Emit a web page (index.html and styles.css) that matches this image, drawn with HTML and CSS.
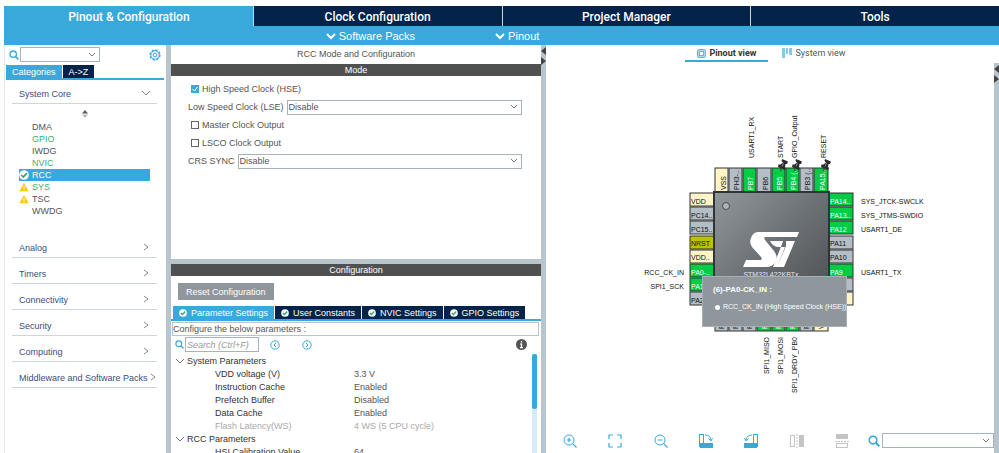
FILE: index.html
```html
<!DOCTYPE html>
<html lang="en">
<head>
    <meta charset="UTF-8">
    <meta name="viewport" content="width=device-width, initial-scale=1.0">
    <title>Pinout &amp; Configuration</title>
    <link rel="stylesheet" href="styles.css">
</head>
<body>
    <svg width="0" height="0" class="defs" aria-hidden="true">
        <symbol id="search" viewBox="0 0 10 10"><circle cx="4.2" cy="4.2" r="3.2" fill="none" stroke="#39a9dc" stroke-width="1.3"/><path d="M6.5 6.5L9.4 9.4" stroke="#39a9dc" stroke-width="1.6"/></symbol>
        <symbol id="down" viewBox="0 0 10 10"><path d="M1 3L5 7L9 3" fill="none" stroke="currentColor"/></symbol>
        <symbol id="right" viewBox="0 0 10 10"><path d="M3 2L7 5L3 8" fill="none" stroke="currentColor"/></symbol>
        <symbol id="ok" viewBox="0 0 10 10"><circle cx="5" cy="5" r="4.8" fill="#fff"/><path d="M2.3 5L4.3 7L7.8 3.2" fill="none" stroke="#2fa866" stroke-width="1.7"/></symbol>
        <symbol id="warn" viewBox="0 0 10 10"><path d="M5 1L9.6 9.3H0.4Z" fill="#ffc800"/><path d="M5 3.8V6.6M5 7.3V8.3" stroke="#fff"/></symbol>
        <symbol id="pushpin" viewBox="0 0 10 12"><path d="M4 0L10 2.5L9 5L7.5 5L7 8L8 9.5L6.5 11L0 8L0.5 5.5H2.5L5 3.5L3.5 2Z" fill="#2b2b2b"/><path d="M3.5 9L2.5 12" stroke="#444" stroke-width="1.3"/><path d="M5.5 4L4 7.5" stroke="#888"/></symbol>
    </svg>

    <nav class="main-tabs">
        <a href="#pinout" class="active">Pinout &amp; Configuration</a>
        <a href="#clock">Clock Configuration</a>
        <a href="#project">Project Manager</a>
        <a href="#tools">Tools</a>
    </nav>
    <div class="sub-bar">
        <button><svg class="icon"><use href="#down"/></svg>Software Packs</button>
        <button><svg class="icon"><use href="#down"/></svg>Pinout</button>
    </div>

    <main class="workspace">
        <aside class="sidebar">
            <div class="sidebar-search">
                <svg class="icon"><use href="#search"/></svg>
                <select class="combo" aria-label="Search peripheral"><option></option></select>
                <button class="gear" aria-label="Settings">
                    <svg width="12" height="12" viewBox="0 0 12 12" fill="none" stroke="#39a9dc"><circle cx="6" cy="6" r="4.9" stroke-width="1.5" stroke-dasharray="2.3 1.5"/><circle cx="6" cy="6" r="4.2"/><circle cx="6" cy="6" r="1.9"/></svg>
                </button>
            </div>
            <div class="side-tabs">
                <button class="active">Categories</button>
                <button>A-&gt;Z</button>
            </div>
            <div class="sections">
                <button class="section">System Core<svg class="icon"><use href="#down"/></svg></button>
                <div class="core">
                    <svg class="sorter" width="6" height="8" viewBox="0 0 6 8"><path d="M0 3.5L3 0L6 3.5Z" fill="#555"/><path d="M0 4.5H6L3 8Z" fill="#bbb"/></svg>
                    <ul>
                        <li><a href="#dma">DMA</a></li>
                        <li class="used"><a href="#gpio">GPIO</a></li>
                        <li><a href="#iwdg">IWDG</a></li>
                        <li class="used"><a href="#nvic">NVIC</a></li>
                        <li class="selected"><svg class="icon"><use href="#ok"/></svg><a href="#rcc">RCC</a></li>
                        <li class="used"><svg class="icon"><use href="#warn"/></svg><a href="#sys">SYS</a></li>
                        <li><svg class="icon"><use href="#warn"/></svg><a href="#tsc">TSC</a></li>
                        <li><a href="#wwdg">WWDG</a></li>
                    </ul>
                </div>
                <button class="section">Analog<svg class="icon"><use href="#right"/></svg></button>
                <button class="section">Timers<svg class="icon"><use href="#right"/></svg></button>
                <button class="section">Connectivity<svg class="icon"><use href="#right"/></svg></button>
                <button class="section">Security<svg class="icon"><use href="#right"/></svg></button>
                <button class="section">Computing<svg class="icon"><use href="#right"/></svg></button>
                <button class="section">Middleware and Software Packs<svg class="icon"><use href="#right"/></svg></button>
            </div>
        </aside>

        <div class="divider"></div>

        <section class="center">
            <div class="mode">
                <h1>RCC Mode and Configuration</h1>
                <h2>Mode</h2>
                <form class="mode-form">
                    <div class="row check"><input type="checkbox" id="hse" checked><label for="hse">High Speed Clock (HSE)</label></div>
                    <div class="row"><label for="lse">Low Speed Clock (LSE)</label><select class="combo" id="lse"><option>Disable</option></select></div>
                    <div class="row check"><input type="checkbox" id="mco"><label for="mco">Master Clock Output</label></div>
                    <div class="row check"><input type="checkbox" id="lsco"><label for="lsco">LSCO Clock Output</label></div>
                    <div class="row"><label for="crs">CRS SYNC</label><select class="combo" id="crs"><option>Disable</option></select></div>
                </form>
            </div>
            <div class="config">
                <h2>Configuration</h2>
                <button class="reset">Reset Configuration</button>
                <div class="config-tabs">
                    <button class="active"><svg class="icon"><use href="#ok"/></svg>Parameter Settings</button>
                    <button><svg class="icon"><use href="#ok"/></svg>User Constants</button>
                    <button><svg class="icon"><use href="#ok"/></svg>NVIC Settings</button>
                    <button><svg class="icon"><use href="#ok"/></svg>GPIO Settings</button>
                </div>
                <p class="hint">Configure the below parameters :</p>
                <div class="param-search">
                    <svg class="icon"><use href="#search"/></svg>
                    <input type="text" placeholder="Search (Ctrl+F)" aria-label="Search parameters">
                    <button aria-label="Previous"><svg width="10" height="10" viewBox="0 0 10 10" fill="none" stroke="#39a9dc"><circle cx="5" cy="5" r="4.2"/><path d="M6 3L4 5L6 7"/></svg></button>
                    <button aria-label="Next"><svg width="10" height="10" viewBox="0 0 10 10" fill="none" stroke="#39a9dc"><circle cx="5" cy="5" r="4.2"/><path d="M4 3L6 5L4 7"/></svg></button>
                    <button class="info" aria-label="Info"><svg width="11" height="11" viewBox="0 0 11 11"><circle cx="5.5" cy="5.5" r="5.5" fill="#555"/><path d="M5.5 2V3.6M5.5 4.6V9M4.3 5H5.5M4 8.6H7" stroke="#fff" stroke-width="1.3"/></svg></button>
                </div>
                <div class="params">
                    <table>
                        <tbody>
                            <tr class="group"><th colspan="2"><svg class="icon"><use href="#down"/></svg>System Parameters</th></tr>
                            <tr><th>VDD voltage (V)</th><td>3.3 V</td></tr>
                            <tr><th>Instruction Cache</th><td>Enabled</td></tr>
                            <tr><th>Prefetch Buffer</th><td>Disabled</td></tr>
                            <tr><th>Data Cache</th><td>Enabled</td></tr>
                            <tr class="locked"><th>Flash Latency(WS)</th><td>4 WS (5 CPU cycle)</td></tr>
                            <tr class="group"><th colspan="2"><svg class="icon"><use href="#down"/></svg>RCC Parameters</th></tr>
                            <tr><th>HSI Calibration Value</th><td>64</td></tr>
                        </tbody>
                    </table>
                    <div class="scrollbar"><div class="thumb"></div></div>
                </div>
            </div>
        </section>

        <div class="divider">
            <svg width="5" height="24" viewBox="0 0 5 24" fill="#444"><path d="M5 2V10L0 6Z"/><path d="M0 12V20L5 16Z"/></svg>
        </div>

        <section class="pinout">
            <div class="view-tabs">
                <button class="active">
                    <svg width="9" height="9" viewBox="0 0 9 9" fill="none" stroke="#5cb9e3"><rect x="0.5" y="0.5" width="8" height="8" rx="1" fill="#a9daf0"/><rect x="2.5" y="2.5" width="4" height="4" fill="#fff"/></svg>Pinout view
                </button>
                <button>
                    <svg width="10" height="10" viewBox="0 0 10 10" fill="#85caea"><path d="M0 0H3V10H0ZM4 0H6V6H4ZM7 0H10V7H7Z"/></svg>System view
                </button>
            </div>

            <div class="canvas">
                <div class="chip-box">
                    <svg class="chip" width="310" height="290" viewBox="0 0 310 290">
                        <defs>
                            <linearGradient id="body" x1="0" y1="0" x2="1" y2="1"><stop offset="0" stop-color="#91989d"/><stop offset="0.5" stop-color="#6b7074"/><stop offset="1" stop-color="#4b4e50"/></linearGradient>
                        </defs>

                        <!-- top pins -->
                        <g class="pin" transform="translate(0 58)">
                            <rect class="power" x="100" width="13" height="25"/>
                            <rect x="114" width="13" height="25"/>
                            <rect class="on" x="128" width="13" height="25"/>
                            <rect x="142" width="14" height="25"/>
                            <rect class="on" x="157" width="13" height="25"/>
                            <rect class="on" x="171" width="13" height="25"/>
                            <rect x="185" width="13" height="25"/>
                            <rect class="on" x="199" width="14" height="25"/>
                        </g>
                        <g class="pin-name" transform="translate(0 80) rotate(-90)">
                            <text y="111">VSS</text>
                            <text y="124">PH3-..</text>
                            <text class="light" y="138">PB7</text>
                            <text y="153">PB6</text>
                            <text class="light" y="167">PB5</text>
                            <text class="light" y="181">PB4 (..</text>
                            <text y="195">PB3 (..</text>
                            <text class="light" y="210">PA15..</text>
                        </g>
                        <g class="signal" transform="translate(0 48) rotate(-90)">
                            <text y="139">USART1_RX</text>
                            <text y="168">START</text>
                            <text y="182">GPIO_Output</text>
                            <text y="211">RESET</text>
                        </g>

                        <!-- bottom pins -->
                        <g class="pin" transform="translate(0 196)">
                            <rect x="100" width="13" height="25"/>
                            <rect x="114" width="13" height="25"/>
                            <rect x="128" width="13" height="25"/>
                            <rect class="on" x="142" width="14" height="25"/>
                            <rect class="on" x="157" width="13" height="25"/>
                            <rect class="on" x="171" width="13" height="25"/>
                            <rect x="185" width="13" height="25"/>
                            <rect class="power" x="199" width="14" height="25"/>
                        </g>
                        <g class="pin-name" transform="translate(0 219) rotate(-90)">
                            <text y="109">PA3</text>
                            <text y="123">PA4</text>
                            <text y="137">PA5</text>
                            <text class="light" y="152">PA6</text>
                            <text class="light" y="166">PA7</text>
                            <text class="light" y="180">PB0</text>
                            <text y="194">PB1</text>
                            <text y="209">VSS</text>
                        </g>
                        <g class="signal end" transform="translate(0 227) rotate(-90)">
                            <text y="154">SPI1_MISO</text>
                            <text y="168">SPI1_MOSI</text>
                            <text y="182">SPI1_DRDY_PB0</text>
                        </g>

                        <!-- left pins -->
                        <g class="pin" transform="translate(75 0)">
                            <rect class="power" y="83" width="25" height="13"/>
                            <rect y="97" width="25" height="13"/>
                            <rect y="111" width="25" height="13"/>
                            <rect class="reset-pin" y="126" width="25" height="13"/>
                            <rect class="power" y="140" width="25" height="13"/>
                            <rect class="on" y="154" width="25" height="13"/>
                            <rect class="on" y="168" width="25" height="13"/>
                            <rect y="182" width="25" height="13"/>
                        </g>
                        <g class="pin-name" transform="translate(76 0)">
                            <text y="94">VDD</text>
                            <text y="108">PC14..</text>
                            <text y="122">PC15..</text>
                            <text y="136">NRST</text>
                            <text y="150">VDD..</text>
                            <text class="light" y="165">PA0-..</text>
                            <text class="light" y="179">PA1</text>
                            <text y="193">PA2</text>
                        </g>
                        <g class="signal end" transform="translate(69 0)">
                            <text y="165">RCC_CK_IN</text>
                            <text y="179">SPI1_SCK</text>
                        </g>

                        <!-- right pins -->
                        <g class="pin" transform="translate(213 0)">
                            <rect class="on" y="83" width="25" height="13"/>
                            <rect class="on" y="97" width="25" height="13"/>
                            <rect class="on" y="111" width="25" height="13"/>
                            <rect y="126" width="25" height="13"/>
                            <rect y="140" width="25" height="13"/>
                            <rect class="on" y="154" width="25" height="13"/>
                            <rect y="168" width="25" height="13"/>
                            <rect class="power" y="182" width="25" height="13"/>
                        </g>
                        <g class="pin-name" transform="translate(215 0)">
                            <text class="light" y="94">PA14..</text>
                            <text class="light" y="108">PA13..</text>
                            <text class="light" y="122">PA12</text>
                            <text y="136">PA11</text>
                            <text y="150">PA10</text>
                            <text class="light" y="165">PA9</text>
                            <text y="179">PA8</text>
                            <text y="193">VDD</text>
                        </g>
                        <g class="signal" transform="translate(246 0)">
                            <text y="94">SYS_JTCK-SWCLK</text>
                            <text y="108">SYS_JTMS-SWDIO</text>
                            <text y="122">USART1_DE</text>
                            <text y="165">USART1_TX</text>
                        </g>

                        <use href="#pushpin" x="163" y="49" width="10" height="12"/>
                        <use href="#pushpin" x="177" y="49" width="10" height="12"/>
                        <use href="#pushpin" x="206" y="49" width="10" height="12"/>

                        <rect x="99" y="82" width="115" height="114" fill="url(#body)" stroke="#2f3335" stroke-width="2"/>
                        <circle cx="111" cy="96" r="3.5" fill="#aab4ba" stroke="#4b4e50"/>
                        <g fill="#fff">
                            <path d="M143 122H184L182 127H151Q148 127 150 130L159 141Q163 146 161 151Q158 157 151 157H128L131 150H145Q148 150 146 147L137 137Q134 133 136 128Q138 122 143 122Z"/>
                            <path d="M155 131H168L167 134L158 157H162L171 136V131H180L169 157H162L170 137H164Q158 137 155 131Z"/>
                        </g>
                        <text class="part" x="156" y="167">STM32L422KBTx</text>
                    </svg>
                    <div class="tooltip" role="tooltip">
                        <strong>(6)-PA0-CK_IN :</strong>
                        <span>RCC_CK_IN (High Speed Clock (HSE))</span>
                    </div>
                </div>
            </div>

            <div class="toolbar">
                <div class="tools">
                    <button aria-label="Zoom in"><svg width="14" height="14" viewBox="0 0 14 14" fill="none" stroke="#39a9dc"><circle cx="6" cy="6" r="5"/><path d="M9.7 9.7L13.5 13.5M3.7 6H8.3M6 3.7V8.3" stroke-width="1.2"/></svg></button>
                    <button aria-label="Fit"><svg width="14" height="14" viewBox="0 0 14 14" fill="none" stroke="#39a9dc" stroke-width="1.2"><path d="M1 5V1H5M9 1H13V5M13 9V13H9M5 13H1V9"/></svg></button>
                    <button aria-label="Zoom out"><svg width="14" height="14" viewBox="0 0 14 14" fill="none" stroke="#39a9dc"><circle cx="6" cy="6" r="5"/><path d="M9.7 9.7L13.5 13.5M3.7 6H8.3" stroke-width="1.2"/></svg></button>
                    <button aria-label="Rotate right"><svg width="14" height="14" viewBox="0 0 14 14" fill="none" stroke="#39a9dc"><rect x="0.5" y="0.5" width="4" height="12"/><rect x="1" y="9" width="13" height="5" fill="#39a9dc" stroke="none"/><path d="M6 1Q11 1 12 6M9.5 4.5L12 7L13.5 4"/></svg></button>
                    <button aria-label="Rotate left"><svg width="14" height="14" viewBox="0 0 14 14" fill="none" stroke="#39a9dc"><rect x="9.5" y="0.5" width="4" height="12"/><rect x="0" y="9" width="13" height="5" fill="#39a9dc" stroke="none"/><path d="M8 1Q3 1 2 6M0.5 4L2 7L4.5 4.5"/></svg></button>
                    <button aria-label="Flip horizontally"><svg width="14" height="14" viewBox="0 0 14 14" fill="none" stroke="#c4c4c4"><rect x="0.5" y="1.5" width="4" height="11"/><path d="M7 0V14" stroke-dasharray="2 1"/><rect x="9" y="1" width="5" height="12" fill="#c4c4c4" stroke="none"/></svg></button>
                    <button aria-label="Flip vertically"><svg width="14" height="14" viewBox="0 0 14 14" fill="none" stroke="#c4c4c4"><rect x="1" y="0" width="12" height="5" fill="#c4c4c4" stroke="none"/><path d="M0 7.5H14" stroke-dasharray="2 1"/><rect x="1.5" y="9.5" width="11" height="4"/></svg></button>
                </div>
                <svg class="icon"><use href="#search"/></svg>
                <select class="combo" aria-label="Search pin"><option></option></select>
            </div>
        </section>

        <div class="divider short">
            <svg width="5" height="24" viewBox="0 0 5 24" fill="#444"><path d="M5 2V10L0 6Z"/><path d="M0 12V20L5 16Z"/></svg>
        </div>
    </main>
</body>
</html>
```

FILE: styles.css
```css
* {
    box-sizing: border-box;
}

body {
    font-family: "Liberation Sans", Arial, sans-serif;
    font-size: 9px;
    line-height: 12px;
    color: #555;
    background-color: #fff;
    margin: 0;
    padding: 6px 0 0 4px;
    height: 100vh;
    display: flex;
    flex-direction: column;
    overflow: hidden;
}

.defs {
    position: absolute;
}

h1, h2, p, ul {
    margin: 0;
    padding: 0;
    font-size: 9px;
    font-weight: normal;
}

a {
    color: inherit;
    text-decoration: none;
}

button, select, input {
    font: inherit;
    color: inherit;
    margin: 0;
    padding: 0;
    border: none;
    background: none;
}

button {
    cursor: pointer;
}

svg {
    display: block;
    flex-shrink: 0;
}

.icon {
    width: 10px;
    height: 10px;
}

.combo {
    appearance: none;
    height: 15px;
    border: 1px solid #a8b2b8;
    border-radius: 0;
    padding: 0 1px;
    background: #fff url("data:image/svg+xml,%3Csvg xmlns='http://www.w3.org/2000/svg' width='8' height='6'%3E%3Cpath d='M1 1L4 4L7 1' fill='none' stroke='%23777'/%3E%3C/svg%3E") no-repeat right 3px center;
}

/* header */
.main-tabs {
    display: grid;
    grid-template-columns: repeat(4, 1fr);
    background-color: #03234b;
}

.main-tabs a {
    height: 20px;
    border-left: 1px solid #cdd5dd;
    color: white;
    font-family: Roboto, Arial, sans-serif;
    font-size: 12px;
    font-weight: 500;
    line-height: 22px;
    text-align: center;
}

.main-tabs .active {
    background-color: #39a9dc;
    border-color: #39a9dc;
}

.sub-bar {
    display: flex;
    justify-content: center;
    gap: 80px;
    height: 19px;
    padding-right: 138px;
    background-color: #39a9dc;
}

.sub-bar button {
    display: flex;
    align-items: center;
    gap: 3px;
    color: white;
    font-size: 11px;
}

.sub-bar .icon {
    stroke-width: 2;
}

.workspace {
    flex: 1;
    min-height: 0;
    display: grid;
    grid-template-columns: 162px 5px 370px 5px 1fr 5px;
}

.divider {
    background-color: #b9c5cc;
}

.short {
    margin-top: 18px;
}

/* left panel */
.sidebar {
    border-left: 1px solid #e6eaec;
    padding: 2px 2px 0 1px;
}

.sidebar-search {
    display: flex;
    align-items: center;
    gap: 1px;
    padding: 0 3px;
}

.sidebar-search .combo {
    width: 80px;
}

.gear {
    margin-left: auto;
}

.side-tabs {
    display: flex;
    gap: 1px;
    margin-top: 3px;
    border-bottom: 2px solid #39a9dc;
}

.side-tabs button {
    height: 13px;
    padding: 0 6px;
    background-color: #03234b;
    color: white;
}

.side-tabs .active {
    background-color: #39a9dc;
}

.sections {
    padding: 8px 7px 0 6px;
}

.section {
    display: flex;
    justify-content: space-between;
    width: 100%;
    height: 16px;
    margin-bottom: 10px;
    padding: 0 7px;
    border-bottom: 1px solid #ccd7dd;
    color: #3c4c7c;
    text-align: left;
    white-space: nowrap;
}

.section .icon {
    margin-right: -1px;
    color: #888;
}

.core {
    height: 132px;
}

.sorter {
    margin: -4px auto 3px;
}

.core ul {
    list-style-type: none;
    padding: 0 7px;
}

.core li {
    display: flex;
    align-items: center;
    gap: 3px;
    height: 12px;
}

.core li a {
    margin-left: 13px;
}

.core .icon + a {
    margin-left: 0;
}

.used {
    color: #3fb06b;
}

.selected {
    background-color: #39a9dc;
    color: white;
}

/* mode and configuration */
.center {
    display: flex;
    flex-direction: column;
    min-height: 0;
    min-width: 0;
}

.mode {
    height: 219px;
    border-bottom: 5px solid #b9c5cc;
}

h1 {
    line-height: 19px;
    text-align: center;
}

h2 {
    height: 12px;
    background-color: #4f5150;
    color: white;
    text-align: center;
}

.mode-form {
    padding: 4px 19px 0 17px;
}

.row {
    display: flex;
    align-items: center;
    gap: 3px;
    height: 18px;
}

.row .combo {
    flex: 1;
}

.check {
    padding-left: 3px;
}

input[type="checkbox"] {
    appearance: none;
    width: 8px;
    height: 8px;
    border: 1px solid #666;
}

input[type="checkbox"]:checked {
    border-color: #39a9dc;
    background: #39a9dc url("data:image/svg+xml,%3Csvg xmlns='http://www.w3.org/2000/svg' width='6' height='6'%3E%3Cpath d='M0.5 3L2.5 5L5.5 1' fill='none' stroke='white'/%3E%3C/svg%3E") no-repeat center;
}

.config {
    flex: 1;
    min-height: 0;
    display: flex;
    flex-direction: column;
}

.config h2 {
    flex-shrink: 0;
}

.reset {
    align-self: flex-start;
    flex-shrink: 0;
    height: 17px;
    margin: 7px 0 6px 7px;
    padding: 0 8px;
    background-color: #8f979c;
    color: white;
}

.config-tabs {
    display: flex;
    gap: 1px;
    padding-left: 2px;
    border-bottom: 2px solid #39a9dc;
}

.config-tabs button {
    display: flex;
    align-items: center;
    gap: 4px;
    height: 13px;
    padding: 0 6px;
    background-color: #03234b;
    color: white;
}

.config-tabs .active {
    background-color: #39a9dc;
}

.config-tabs .icon {
    width: 8px;
    height: 8px;
}

.hint {
    margin: 1px 2px 0 1px;
    border: 1px solid #b9c5cc;
}

.param-search {
    display: flex;
    align-items: center;
    padding: 1px 14px 0 4px;
}

.param-search .icon {
    width: 9px;
    height: 9px;
    margin-right: 1px;
}

.param-search input {
    width: 74px;
    height: 15px;
    padding: 0 1px;
    border: 1px solid #a8b2b8;
}

.param-search input::placeholder {
    color: #999;
    font-style: italic;
}

.param-search input + button {
    margin: 0 22px 0 11px;
}

.param-search .info {
    margin-left: auto;
}

.params {
    flex: 1;
    min-height: 0;
    display: flex;
    justify-content: space-between;
    margin-top: 2px;
    padding-right: 4px;
    overflow: hidden;
}

table {
    align-self: flex-start;
    border-collapse: collapse;
}

th, td {
    height: 13px;
    padding: 0;
    font-weight: normal;
    text-align: left;
}

th {
    width: 183px;
    padding-left: 44px;
    color: #333;
}

.group th {
    padding-left: 16px;
}

.group .icon {
    float: left;
    margin: 1px 0 0 -12px;
    color: #777;
}

.locked th, .locked td {
    color: #aaa;
}

.scrollbar {
    width: 5px;
    background-color: #d8eaf6;
}

.thumb {
    height: 55px;
    border-radius: 2px;
    background-color: #39a9dc;
}

/* pinout view */
.pinout {
    display: flex;
    flex-direction: column;
    min-width: 0;
}

.view-tabs {
    display: flex;
    justify-content: center;
    gap: 2px;
    padding: 1px 0 0 3px;
}

.view-tabs button {
    display: flex;
    align-items: center;
    gap: 3px;
    height: 16px;
    padding: 0 12px;
    border-bottom: 2px solid transparent;
    font-family: Roboto, Arial, sans-serif;
}

.view-tabs .active {
    border-color: #39a9dc;
    color: #333;
    font-weight: bold;
}

.canvas {
    flex: 1;
    display: flex;
    align-items: center;
    justify-content: center;
    padding-top: 20px;
}

.chip-box {
    position: relative;
}

.chip {
    font-size: 7px;
}

.pin rect {
    fill: #b4bec6;
    stroke: #333;
}

.pin .on {
    fill: #00cc44;
}

.pin .power {
    fill: #fff3c8;
}

.pin .reset-pin {
    fill: #b8c400;
}

.pin-name text, .signal text {
    fill: #111;
}

.pin-name .light {
    fill: white;
}

.end {
    text-anchor: end;
}

.part {
    fill: #e4e8ea;
    text-anchor: middle;
}

.tooltip {
    position: absolute;
    left: 87px;
    top: 166px;
    width: 145px;
    height: 51px;
    padding: 7px 0 0 10px;
    border: 1px solid #a8b0b5;
    background-color: #8f979c;
    color: white;
    font-size: 7px;
    white-space: nowrap;
}

.tooltip strong {
    display: block;
    margin-bottom: 5px;
    font-size: 8px;
}

.tooltip span {
    display: flex;
    align-items: center;
    gap: 3px;
    padding-left: 2px;
}

.tooltip span::before {
    content: "";
    flex-shrink: 0;
    width: 5px;
    height: 5px;
    border-radius: 50%;
    background-color: white;
}

.toolbar {
    display: flex;
    align-items: center;
    height: 25px;
    padding-left: 17px;
}

.tools {
    flex: 1;
    display: flex;
    justify-content: space-between;
}

.toolbar .icon {
    width: 12px;
    height: 12px;
    margin: 0 2px 0 19px;
}

.toolbar .combo {
    width: 112px;
}
```
